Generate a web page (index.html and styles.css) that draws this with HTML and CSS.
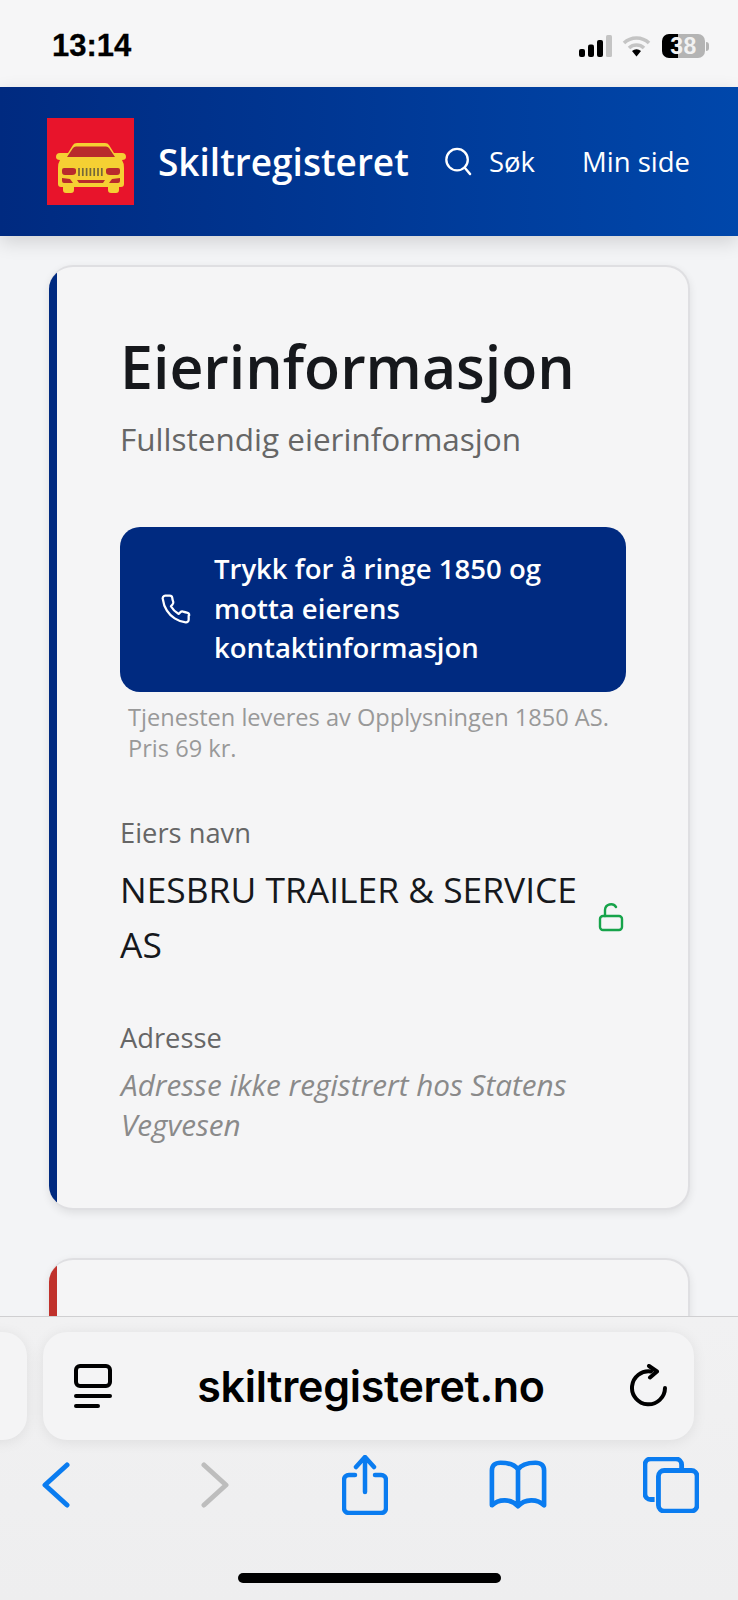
FILE: index.html
```html
<!DOCTYPE html>
<html lang="no">
<head>
<meta charset="utf-8">
<title>Skiltregisteret</title>
<link rel="stylesheet" href="styles.css">
</head>
<body>
<div class="phone">
  <div class="status">
    <span class="time">13:14</span>
    <div class="status-icons">
      <svg class="signal" width="33" height="22" viewBox="0 0 33 22"><rect x="0" y="14" width="6" height="8" rx="2" fill="#000"/><rect x="9" y="9.500" width="6" height="12.500" rx="2" fill="#000"/><rect x="18" y="5" width="6" height="17" rx="2" fill="#000"/><rect x="27" y="0" width="6" height="22" rx="1.500" fill="#c4c4c4"/></svg>
      <svg class="wifi" width="29" height="22" viewBox="0 0 29 22"><path d="M2 8a18 18 0 0 1 25 0" fill="none" stroke="#c4c4c4" stroke-width="3.600"/><path d="M7 13a11 11 0 0 1 15 0" fill="none" stroke="#c4c4c4" stroke-width="3.600"/><path d="M10 16a7 7 0 0 1 9 0l-4.500 5.500z" fill="#000"/></svg>
      <div class="battery"><span class="battery-num">38</span></div>
      <div class="battery-tip"></div>
    </div>
  </div>

  <header class="site-header">
    <div class="logo">
      <svg width="70" height="50" viewBox="0 0 70 50"><path d="M12 10 17 2Q18 0 21 0H49Q52 0 53 2L58 10H66Q70 10 70 14 70 17 66 17 68 20 68 25V41Q68 44 65 44H63V47Q63 50 60 50H55Q52 50 52 47V44H18V47Q18 50 15 50H10Q7 50 7 47V44H5Q2 44 2 41V25Q2 20 4 17 0 17 0 14 0 10 4 10Z" fill="#f5d033"/><path d="M11 14 17 5Q18 3.500 20 3.500H50Q52 3.500 53 5L59 14Z" fill="#b92a2c"/><path d="M8 25H17Q20 25 20 27V29Q20 32 16 32H9Q6 32 6 29V27Q6 25 8 25ZM62 25H53Q50 25 50 27V29Q50 32 54 32H61Q64 32 64 29V27Q64 25 62 25ZM6 35 14 36 17 40H8Q6 40 6 38ZM64 35 56 36 53 40H62Q64 40 64 38ZM21 37H49L47 40H23Z" fill="#b92a2c"/><path d="M23 25v8M26.800 25v8M30.600 25v8M34.400 25v8M38.200 25v8M42 25v8M45.800 25v8" stroke="#75683a" stroke-width="1.700"/></svg>
    </div>
    <span class="brand">Skiltregisteret</span>
    <nav class="nav">
      <a class="nav-link search-link">
        <svg width="28" height="30" viewBox="0 0 30 32" fill="none" stroke="#fff" stroke-width="2.500" stroke-linecap="round"><circle cx="14" cy="13.500" r="11.500"/><path d="M22 22 28 29"/></svg>
        <span>Søk</span>
      </a>
      <a class="nav-link">Min side</a>
    </nav>
  </header>

  <main class="content">
    <section class="card">
      <div class="strip"></div>
      <div class="card-body">
        <h1 class="title">Eierinformasjon</h1>
        <p class="subtitle">Fullstendig eierinformasjon</p>
        <button class="call">
          <svg width="32" height="32" viewBox="0 0 24 24" fill="none" stroke="#fff" stroke-width="1.700" stroke-linecap="round" stroke-linejoin="round"><path d="M21.500 17v3a2 2 0 0 1-2.200 2 19 19 0 0 1-8.300-3 18.500 18.500 0 0 1-5.800-5.800 19 19 0 0 1-3-8.300A2 2 0 0 1 4.200 2h3a2 2 0 0 1 2 1.700c.1 1 .3 1.900.7 2.800a2 2 0 0 1-.5 2.100L8.200 9.900a15 15 0 0 0 5.800 5.800l1.300-1.300a2 2 0 0 1 2.100-.4c.9.300 1.800.6 2.800.7a2 2 0 0 1 1.700 2z"/></svg>
          <span>Trykk for å ringe 1850 og motta eierens kontaktinformasjon</span>
        </button>
        <p class="note">Tjenesten leveres av Opplysningen 1850 AS. Pris 69 kr.</p>
        <div class="field owner-field">
          <div class="label">Eiers navn</div>
          <div class="owner-row">
            <div class="owner">NESBRU TRAILER &amp; SERVICE AS</div>
            <svg class="lock" width="26" height="30" viewBox="0 0 26 30" fill="none" stroke="#16a34a" stroke-width="2.400" stroke-linecap="round" stroke-linejoin="round"><rect x="2" y="14" width="22" height="14" rx="3"/><path d="M7 14V8a6 6 0 0 1 11-3"/></svg>
          </div>
        </div>
        <div class="field">
          <div class="label">Adresse</div>
          <div class="address">Adresse ikke registrert hos Statens Vegvesen</div>
        </div>
      </div>
    </section>
    <section class="card card-red">
      <div class="strip strip-red"></div>
    </section>
  </main>

  <div class="browser">
    <div class="pills">
      <div class="pill-prev"></div>
      <div class="pill-url">
        <svg width="38" height="44" viewBox="0 0 38 44" fill="none" stroke="#000" stroke-width="4" stroke-linecap="round"><rect x="2" y="2" width="34" height="20" rx="4"/><path d="M2 32H36M2 42H24"/></svg>
        <span class="url">skiltregisteret.no</span>
        <svg width="37" height="44" viewBox="0 0 37 44" fill="none" stroke="#000" stroke-width="4" stroke-linecap="round" stroke-linejoin="round"><path d="M21 7.500A16.500 16.500 0 1 0 35 24"/><path d="M19 2l8 5.500-7 6"/></svg>
      </div>
    </div>
    <div class="tools">
      <svg class="tool tool-back" width="28" height="46" viewBox="0 0 28 46" fill="none" stroke="#0a7cf0" stroke-width="5" stroke-linecap="round" stroke-linejoin="round"><path d="M25 3 3 23l22 20"/></svg>
      <svg class="tool tool-forward" width="28" height="46" viewBox="0 0 28 46" fill="none" stroke="#bdbdbd" stroke-width="5" stroke-linecap="round" stroke-linejoin="round"><path d="M3 3l22 20L3 43"/></svg>
      <svg class="tool tool-share" width="46" height="60" viewBox="0 0 46 60" fill="none" stroke="#0a7cf0" stroke-width="4.500" stroke-linecap="round" stroke-linejoin="round"><path d="M13 20H7a5 5 0 0 0-5 5v28a5 5 0 0 0 5 5h32a5 5 0 0 0 5-5V25a5 5 0 0 0-5-5h-6"/><path d="M23 37V3M14 12 23 2l9 10"/></svg>
      <svg class="tool tool-book" width="58" height="50" viewBox="0 0 60 50" fill="none" stroke="#0a7cf0" stroke-width="4.800" stroke-linecap="round" stroke-linejoin="round"><path d="M30 9C26 3 19 2 12 2 6 2 3 5 3 10V46C10 39 23 39 30 47 37 39 50 39 57 46V10C57 5 54 2 48 2 41 2 34 3 30 9ZM30 9V46"/></svg>
      <svg class="tool tool-tabs" width="56" height="56" viewBox="0 0 58 58" fill="none" stroke="#0a7cf0" stroke-width="5" stroke-linejoin="round"><path d="M12 44H8a6 6 0 0 1-6-6V8a6 6 0 0 1 6-6h26a6 6 0 0 1 6 6v5"/><rect x="16" y="14" width="40" height="42" rx="6"/></svg>
    </div>
    <div class="home-row"><div class="home-bar"></div></div>
  </div>
</div>
</body>
</html>
```

FILE: styles.css
```css
* { box-sizing: border-box; }
html, body { margin: 0; padding: 0; }
body { background: #f3f4f6; font-family: "Open Sans", "Liberation Sans", sans-serif; }
.phone { width: 738px; height: 1600px; display: flex; flex-direction: column; overflow: hidden; background: #f3f4f6; }

.status { height: 87px; flex: none; background: #f6f6f7; display: flex; align-items: center; justify-content: space-between; padding: 5px 29px 0 52px; }
.time { font-family: "Liberation Sans", sans-serif; font-weight: 700; font-size: 31px; color: #000; -webkit-text-stroke: .3px #000; }
.status-icons { display: flex; align-items: center; }
.signal { margin-right: 10px; }
.wifi { margin-right: 11px; }
.battery { width: 43px; height: 24px; border-radius: 7px; background: linear-gradient(90deg, #000 16px, #b4b4b4 16px); display: flex; align-items: center; justify-content: center; }
.battery-num { font-family: "Liberation Sans", sans-serif; font-weight: 700; font-size: 23px; line-height: 24px; letter-spacing: .5px; color: #f2f2f2; }
.battery-tip { width: 3px; height: 9px; margin-left: 1px; background: #b4b4b4; border-radius: 0 3px 3px 0; }

.site-header { height: 149px; flex: none; display: flex; align-items: center; padding: 0 48px 0 47px; background: linear-gradient(90deg, #002a80 0%, #0047ab 100%); box-shadow: 0 6px 18px rgba(0,0,0,.14); position: relative; z-index: 1; color: #fff; }
.logo { width: 87px; height: 87px; margin-bottom: 1px; padding-top: 13px; background: #e8142b; display: flex; align-items: center; justify-content: center; flex: none; }
.brand { font-size: 37px; font-weight: 600; margin-left: 24px; white-space: nowrap; }
.nav { margin-left: auto; display: flex; align-items: center; gap: 47px; }
.nav-link { display: flex; align-items: center; gap: 17px; font-size: 27.500px; color: #fff; white-space: nowrap; }

.content { flex: 1; min-height: 0; overflow: hidden; padding: 29px 48px 0 49px; display: flex; flex-direction: column; gap: 48px; }
.card { flex: none; height: 945px; display: flex; overflow: hidden; background: #f5f5f6; border: 2px solid #dfdfe2; border-left: 0; border-radius: 24px; box-shadow: 0 3px 8px rgba(0,0,0,.09); }
.card-red { height: 300px; }
.strip { width: 8px; flex: none; background: #002a80; }
.strip-red { background: #c0312b; }
.card-body { flex: 1; min-width: 0; padding: 61px 62px 0 63px; }
.title { margin: 0; font-size: 59px; font-weight: 600; line-height: 76px; color: #16181c; white-space: nowrap; }
.subtitle { margin: 14px 0 0; font-size: 31.500px; line-height: 42px; color: #666; }
.call { width: 100%; height: 165px; margin-top: 67px; padding: 0 32px 2px 40px; border: 0; border-radius: 20px; background: #002a80; color: #fff; display: flex; align-items: center; gap: 22px; text-align: left; font-family: inherit; font-size: 27.500px; font-weight: 600; line-height: 39.600px; }
.call svg { flex: none; }
.note { margin: 10px 0 0 8px; font-size: 23.600px; line-height: 31px; color: #999; }
.field { margin-top: 47px; }
.owner-field { margin-top: 50px; }
.label { font-size: 27.300px; line-height: 38px; color: #666; }
.owner-row { display: flex; align-items: center; justify-content: space-between; margin-top: 10px; }
.owner { width: 470px; font-size: 35.400px; line-height: 55px; color: #16181c; }
.lock { flex: none; margin-right: 2px; }
.address { margin-top: 8px; margin-left: 1px; font-size: 29.700px; font-style: italic; line-height: 40px; color: #8a8a8a; }

.browser { height: 284px; flex: none; background: linear-gradient(180deg, #f1f1f2, #eeeeef); border-top: 1px solid #cfcfd1; position: relative; z-index: 2; display: flex; flex-direction: column; }
.pills { display: flex; gap: 16px; margin: 15px 0 0 -73px; }
.pill-prev { width: 100px; height: 108px; background: #f4f4f5; border-radius: 24px; box-shadow: 0 2px 14px rgba(0,0,0,.08); flex: none; }
.pill-url { width: 651px; height: 108px; background: #f4f4f5; border-radius: 24px; box-shadow: 0 2px 14px rgba(0,0,0,.08); flex: none; display: flex; align-items: center; justify-content: space-between; padding: 0 27px 0 31px; }
.url { font-family: Inter, "Liberation Sans", sans-serif; font-size: 43px; font-weight: 600; letter-spacing: -.3px; color: #000; white-space: nowrap; }
.tools { display: flex; align-items: center; padding-left: 42px; margin-top: 15px; height: 60px; }
.tool { flex: none; }
.tool-forward { margin-left: 131px; }
.tool-share { margin-left: 113px; }
.tool-book { margin-left: 101px; }
.tool-tabs { margin-left: 96px; }
.home-row { margin-top: 58px; display: flex; justify-content: center; }
.home-bar { width: 263px; height: 10px; border-radius: 5px; background: #000; }
```
